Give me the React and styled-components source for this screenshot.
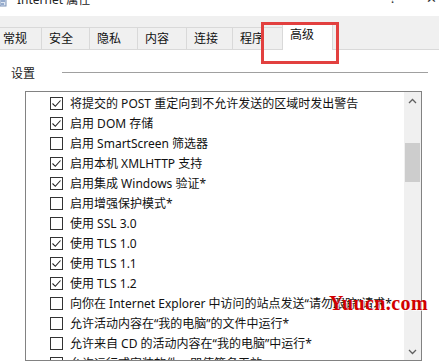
import React from "react";
import styled, { createGlobalStyle } from "styled-components";

const GlobalStyle = createGlobalStyle`
  html, body {
    margin: 0;
    padding: 0;
    background: #ffffff;
    overflow: hidden;
  }
  body {
    font-family: "Noto Sans", "Noto Sans CJK SC", sans-serif;
    font-size: 12px;
    color: #000000;
  }
`;

const Window = styled.div`
  position: relative;
  width: 439px;
  height: 361px;
  overflow: hidden;
  background: #ffffff;
`;

const TitleBar = styled.div`
  display: flex;
  align-items: flex-start;
  height: 16px;
  overflow: hidden;
  background: #ffffff;
`;

const TitleIcon = styled.svg`
  margin-top: -5px;
  flex: none;
`;

const TitleText = styled.span`
  margin-left: 10px;
  margin-top: -8px;
  line-height: 16px;
  color: #222;
`;

const TitleButtons = styled.div`
  display: flex;
  gap: 30px;
  margin-left: auto;
  margin-right: 2px;
  margin-top: -10px;
  line-height: 16px;
  font-size: 13px;
  color: #333;
`;

const TabStrip = styled.div`
  display: flex;
  align-items: flex-end;
  height: 34px;
  box-sizing: border-box;
  background: #f0f0f0;
  border-bottom: 1px solid #d9d9d9;
`;

const Tab = styled.div`
  box-sizing: border-box;
  flex: none;
  width: ${(p) => p.$w}px;
  height: ${(p) => (p.$active ? 27 : 22)}px;
  margin-left: ${(p) => p.$ml || 0}px;
  margin-bottom: ${(p) => (p.$active ? -1 : 0)}px;
  padding: 3px 0 0 ${(p) => p.$pl || 7}px;
  line-height: 16px;
  background: ${(p) => (p.$active ? "#ffffff" : "#f0f0f0")};
  border-top: 1px solid #d9d9d9;
  border-right: 1px solid #d9d9d9;
  border-left: ${(p) => (p.$active ? "1px solid #d9d9d9" : "none")};
  color: #111;
  white-space: nowrap;
`;

const Content = styled.div`
  padding: 16px 11px 0 11px;
`;

const SectionHeader = styled.div`
  display: flex;
  align-items: center;
  gap: 27px;
  height: 16px;
  line-height: 16px;
  color: #222;
`;

const Rule = styled.div`
  flex: 1;
  height: 1px;
  margin-top: -4px;
  background: #a0a0a0;
`;

const ListBox = styled.div`
  display: flex;
  box-sizing: border-box;
  width: 397px;
  height: 270px;
  margin: 9px 0 0 14px;
  border: 1px solid #828282;
  background: #ffffff;
`;

const Rows = styled.div`
  flex: 1;
  min-width: 0;
  padding-top: 1px;
  overflow: hidden;
`;

const Row = styled.div`
  display: flex;
  align-items: center;
  gap: 7px;
  height: 20px;
  padding-left: 24px;
  white-space: nowrap;
  color: #111;
`;

const Box = styled.span`
  display: inline-flex;
  align-items: center;
  justify-content: center;
  flex: none;
  box-sizing: border-box;
  width: 13px;
  height: 13px;
  border: 1px solid #333333;
  background: #ffffff;
`;

const Scrollbar = styled.div`
  display: flex;
  flex-direction: column;
  flex: none;
  width: 17px;
  background: #f0f0f0;
`;

const ArrowButton = styled.div`
  display: flex;
  align-items: center;
  justify-content: center;
  height: 17px;
  flex: none;
`;

const Track = styled.div`
  flex: 1;
`;

const Thumb = styled.div`
  height: ${(p) => p.$h}px;
  margin: ${(p) => p.$top}px 1px 0 1px;
  background: #cdcdcd;
`;

const Highlight = styled.div`
  position: absolute;
  left: 261px;
  top: 22px;
  width: 78px;
  height: 42px;
  box-sizing: border-box;
  border: 3px solid #e2403f;
`;

const Watermark = styled.div`
  position: absolute;
  left: 329px;
  top: 291px;
  font-family: "Liberation Serif", serif;
  font-weight: bold;
  font-size: 20px;
  line-height: 24px;
  letter-spacing: 0.4px;
  color: #d20000;
  white-space: nowrap;
  text-shadow: 1px 1px 0 rgba(255, 255, 255, 0.7);
`;

const tabs = [
  { label: "常规", w: 47, ml: -5, pl: 8 },
  { label: "安全", w: 48 },
  { label: "隐私", w: 48 },
  { label: "内容", w: 49 },
  { label: "连接", w: 46 },
  { label: "程序", w: 50 },
  { label: "高级", w: 51, active: true, ml: -1 },
];

const options = [
  { text: "将提交的 POST 重定向到不允许发送的区域时发出警告", on: true },
  { text: "启用 DOM 存储", on: true },
  { text: "启用 SmartScreen 筛选器", on: false },
  { text: "启用本机 XMLHTTP 支持", on: true },
  { text: "启用集成 Windows 验证*", on: true },
  { text: "启用增强保护模式*", on: false },
  { text: "使用 SSL 3.0", on: false },
  { text: "使用 TLS 1.0", on: true },
  { text: "使用 TLS 1.1", on: true },
  { text: "使用 TLS 1.2", on: true },
  { text: "向你在 Internet Explorer 中访问的站点发送“请勿跟踪”请求*", on: false },
  { text: "允许活动内容在“我的电脑”的文件中运行*", on: false },
  { text: "允许来自 CD 的活动内容在“我的电脑”中运行*", on: false },
  { text: "允许运行或安装软件，即使签名无效", on: false },
];

const Checkbox = ({ checked }) => (
  <Box>
    {checked && (
      <svg width="11" height="11" viewBox="0 0 11 11">
        <path d="M1.5 5.5 L4.3 8.3 L9.5 2.5" fill="none" stroke="#222" strokeWidth="1.1" />
      </svg>
    )}
  </Box>
);

const Chevron = ({ down }) => (
  <svg width="9" height="6" viewBox="0 0 9 6">
    <path
      d={down ? "M1 1 L4.5 4.5 L8 1" : "M1 5 L4.5 1.5 L8 5"}
      fill="none"
      stroke="#606060"
      strokeWidth="1.3"
    />
  </svg>
);

const App = () => {
  return (
    <Window>
      <GlobalStyle />
      <TitleBar>
        <TitleIcon width="7" height="12" viewBox="0 0 7 12">
          <rect x="0" y="0" width="6" height="11" fill="#dfe7f2" stroke="#7d93b8" />
          <path d="M1 3 H5 M1 6 H5 M1 9 H4" stroke="#4a6fa8" />
        </TitleIcon>
        <TitleText>Internet 属性</TitleText>
        <TitleButtons>
          <span>?</span>
          <span>✕</span>
        </TitleButtons>
      </TitleBar>

      <TabStrip>
        {tabs.map((t) => (
          <Tab key={t.label} $w={t.w} $ml={t.ml} $pl={t.pl} $active={t.active}>
            {t.label}
          </Tab>
        ))}
      </TabStrip>

      <Content>
        <SectionHeader>
          <span>设置</span>
          <Rule />
        </SectionHeader>

        <ListBox>
          <Rows>
            {options.map((o) => (
              <Row key={o.text}>
                <Checkbox checked={o.on} />
                <span>{o.text}</span>
              </Row>
            ))}
          </Rows>
          <Scrollbar>
            <ArrowButton>
              <Chevron />
            </ArrowButton>
            <Track>
              <Thumb $top={34} $h={39} />
            </Track>
            <ArrowButton>
              <Chevron down />
            </ArrowButton>
          </Scrollbar>
        </ListBox>
      </Content>

      <Highlight />
      <Watermark>Yuucn.com</Watermark>
    </Window>
  );
};

export default App;
